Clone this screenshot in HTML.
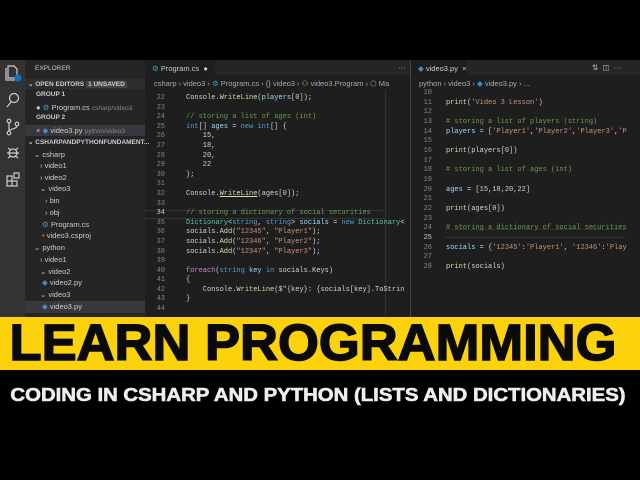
<!DOCTYPE html>
<html><head><meta charset="utf-8"><style>
*{margin:0;padding:0;box-sizing:border-box}
body{width:640px;height:480px;background:#000;overflow:hidden;position:relative;font-family:"Liberation Sans",sans-serif}
.a{position:absolute;white-space:nowrap}
.sb{font-size:7.5px;color:#ccc}
.code{font-family:"Liberation Mono",monospace;font-size:7px;color:#d4d4d4}
.ln{color:#858585;text-align:right;width:20px}
.c{color:#6a9955}.k{color:#569cd6}.s{color:#ce9178}.t{color:#4ec9b0}.f{color:#dcdcaa}.v{color:#9cdcfe}
</style></head><body>
<div class="a" style="left:0;top:60px;width:640px;height:257px;background:#1e1e1e"></div>
<div class="a" style="left:0;top:60px;width:25px;height:257px;background:#333"></div>
<svg class="a" style="left:3px;top:63px" width="20" height="130" viewBox="0 0 20 130" fill="none" stroke="#ccc" stroke-width="1.2">
<path d="M5 3h6l3 3v9H5z M3 5v12h9"/><circle cx="15" cy="15" r="3.5" fill="#0e70c0" stroke="none"/>
<circle cx="11" cy="35" r="4.5"/><path d="M8 39l-4 5"/>
<circle cx="6" cy="58" r="1.8"/><circle cx="14" cy="61" r="1.8"/><circle cx="6" cy="70" r="1.8"/><path d="M6 60v8 M14 63c0 3-8 3-8 5"/>
<circle cx="10" cy="90" r="4"/><path d="M4 90h12 M5 85l3 2 M15 85l-3 2 M5 95l3-2 M15 95l-3-2"/>
<path d="M4 113h5v5H4z M4 118h5v5H4z M9 118h5v5H9z M11 110h5v5h-5z"/>
</svg>
<div class="a" style="left:25px;top:60px;width:120px;height:257px;background:#252526"></div>
<div class="a" style="left:25px;top:79px;width:120px;height:10px;background:#2d2d2e"></div>
<div class="a" style="left:25px;top:125px;width:120px;height:11px;background:#37373d"></div>
<div class="a" style="left:25px;top:301px;width:120px;height:12px;background:#37373d"></div>
<div class="a sb" style="left:35px;top:65px;font-size:6.5px">EXPLORER</div>
<div class="a sb" style="left:28px;top:80px;font-size:6.5px;font-weight:bold">⌄ OPEN EDITORS <span style="background:#444;padding:0 2px">1 UNSAVED</span></div>
<div class="a sb" style="left:36px;top:91px;font-size:6.5px;font-weight:bold">GROUP 1</div>
<div class="a sb" style="left:36px;top:103px">● <span style="color:#519aba">⚙</span> Program.cs <span style="color:#888;font-size:6.5px">csharp/video3</span></div>
<div class="a sb" style="left:36px;top:114px;font-size:6.5px;font-weight:bold">GROUP 2</div>
<div class="a sb" style="left:36px;top:126px">× <span style="color:#3e8dc5">◆</span> video3.py <span style="color:#888;font-size:6.5px">python/video3</span></div>
<div class="a sb" style="left:28px;top:138px;font-size:6.5px;font-weight:bold">⌄ CSHARPANDPYTHONFUNDAMENT...</div>
<div class="a sb" style="left:34px;top:150px">⌄ csharp</div>
<div class="a sb" style="left:40px;top:161px">› video1</div>
<div class="a sb" style="left:40px;top:173px">› video2</div>
<div class="a sb" style="left:40px;top:184px">⌄ video3</div>
<div class="a sb" style="left:45px;top:196px">› bin</div>
<div class="a sb" style="left:45px;top:208px">› obj</div>
<div class="a sb" style="left:42px;top:220px"><span style="color:#519aba">⚙</span> Program.cs</div>
<div class="a sb" style="left:42px;top:231px"><span style="color:#c07040">▪</span> video3.csproj</div>
<div class="a sb" style="left:34px;top:243px">⌄ python</div>
<div class="a sb" style="left:40px;top:255px">› video1</div>
<div class="a sb" style="left:40px;top:267px">⌄ video2</div>
<div class="a sb" style="left:42px;top:278px"><span style="color:#3e8dc5">◆</span> video2.py</div>
<div class="a sb" style="left:40px;top:290px">⌄ video3</div>
<div class="a sb" style="left:42px;top:302px"><span style="color:#3e8dc5">◆</span> video3.py</div>
<div class="a" style="left:145px;top:60px;width:266px;height:15px;background:#252526"></div>
<div class="a" style="left:145px;top:60px;width:70px;height:15px;background:#1e1e1e"></div>
<div class="a sb" style="left:152px;top:64px"><span style="color:#519aba">⚙</span> Program.cs &nbsp;●</div>
<div class="a sb" style="left:398px;top:63px">···</div>
<div class="a sb" style="left:154px;top:79px;color:#aaa">csharp › video3 › <span style="color:#519aba">⚙</span> Program.cs › {} video3 › <span style="color:#e8a33e">⚇</span> video3.Program › ⬡ Ma</div>
<div class="a" style="left:410px;top:60px;width:1px;height:257px;background:#444"></div>
<div class="a" style="left:385px;top:90px;width:1px;height:227px;background:#333"></div>
<div class="a" style="left:145px;top:210px;width:240px;height:9px;border-top:1px solid #333;border-bottom:1px solid #333"></div>
<div class="a code" style="left:145px;top:94px;line-height:9.6px">
<div class="ln" style="position:absolute;left:0;top:0">22<br>23<br>24<br>25<br>26<br>27<br>28<br>29<br>30<br>31<br>32<br>33<br><span style="color:#ccc">34</span><br>35<br>36<br>37<br>38<br>39<br>40<br>41<br>42<br>43<br>44</div>
<div style="position:absolute;left:41px;top:0">Console.<span class="f">WriteLine</span>(<span class="v">players</span>[0]);<br><br><span class="c">// storing a list of ages (int)</span><br><span class="k">int</span>[] <span class="v">ages</span> = <span class="k">new</span> <span class="k">int</span>[] {<br>&nbsp;&nbsp;&nbsp;&nbsp;15,<br>&nbsp;&nbsp;&nbsp;&nbsp;18,<br>&nbsp;&nbsp;&nbsp;&nbsp;20,<br>&nbsp;&nbsp;&nbsp;&nbsp;22<br>};<br><br>Console.<span class="f" style="text-decoration:underline">WriteLine</span>(ages[0]);<br><br><span class="c">// storing a dictionary of social securities</span><br><span class="t">Dictionary</span>&lt;<span class="k">string</span>, <span class="k">string</span>&gt; <span class="v">socials</span> = <span class="k">new</span> <span class="t">Dictionary</span>&lt;<br>socials.<span class="f">Add</span>(<span class="s">"12345"</span>, <span class="s">"Player1"</span>);<br>socials.<span class="f">Add</span>(<span class="s">"12346"</span>, <span class="s">"Player2"</span>);<br>socials.<span class="f">Add</span>(<span class="s">"12347"</span>, <span class="s">"Player3"</span>);<br><br><span style="color:#c586c0">foreach</span>(<span class="k">string</span> <span class="v">key</span> <span class="k">in</span> socials.Keys)<br>{<br>&nbsp;&nbsp;&nbsp;&nbsp;Console.<span class="f">WriteLine</span>($"{key}: {socials[key].ToStrin<br>}<br></div>
</div>
<div class="a" style="left:411px;top:60px;width:229px;height:15px;background:#252526"></div>
<div class="a" style="left:411px;top:60px;width:55px;height:15px;background:#1e1e1e"></div>
<div class="a sb" style="left:418px;top:64px"><span style="color:#3e8dc5">◆</span> video3.py &nbsp;×</div>
<div class="a sb" style="left:592px;top:63px;color:#bbb">⇅ &nbsp;◫ &nbsp;···</div>
<div class="a sb" style="left:419px;top:79px;color:#aaa">python › video3 › <span style="color:#3e8dc5">◆</span> video3.py › ...</div>
<div class="a" style="left:445px;top:229px;width:180px;height:9px;border-top:1px solid #333;border-bottom:1px solid #333"></div>
<div class="a code" style="left:412px;top:89px;line-height:9.67px;width:215px;overflow:hidden;height:190px">
<div class="ln" style="position:absolute;left:0;top:0">10<br>11<br>12<br>13<br>14<br>15<br>16<br>17<br>18<br>19<br>20<br>21<br>22<br>23<br>24<br><span style="color:#ccc">25</span><br>26<br>27<br>28</div>
<div style="position:absolute;left:34px;top:0"><br><span class="f">print</span>(<span class="s">'Video 3 Lesson'</span>)<br><br><span class="c"># storing a list of players (string)</span><br><span class="v">players</span> = [<span class="s">'Player1'</span>,<span class="s">'Player2'</span>,<span class="s">'Player3'</span>,<span class="s">'Pla</span><br><br><span class="f">print</span>(players[0])<br><br><span class="c"># storing a list of ages (int)</span><br><br><span class="v">ages</span> = [15,18,20,22]<br><br><span class="f">print</span>(ages[0])<br><br><span class="c"># storing a dictionary of social securities</span><br><br><span class="v">socials</span> = {<span class="s">'12345'</span>:<span class="s">'Player1'</span>, <span class="s">'12346'</span>:<span class="s">'Player</span><br><br><span class="f">print</span>(socials)</div>
</div>
<div class="a" style="left:0;top:317px;width:640px;height:53px;background:#fcd20c"></div>
<div class="a" style="left:-7px;top:316px;width:640px;text-align:center;font-size:51px;font-weight:bold;color:#0a0a0a;line-height:54px;-webkit-text-stroke:1.5px #0a0a0a;transform:scaleX(1.03)">LEARN PROGRAMMING</div>
<div class="a" style="left:-2px;top:384px;width:640px;text-align:center;font-size:18px;font-weight:bold;color:#eee;line-height:22px;-webkit-text-stroke:0.6px #eee;transform:scaleX(1.13)">CODING IN CSHARP AND PYTHON (LISTS AND DICTIONARIES)</div>
</body></html>
